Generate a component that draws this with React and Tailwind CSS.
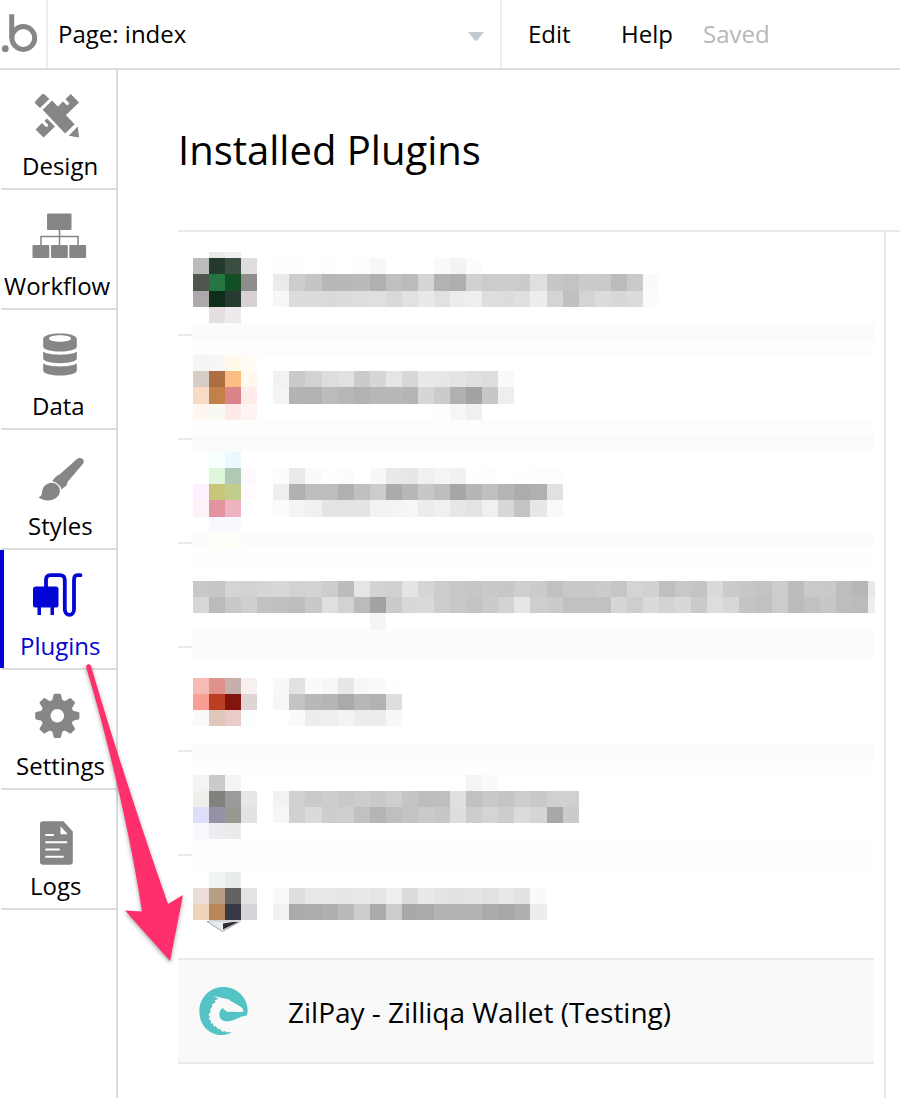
const PITCH_X = 16.07;
const PITCH_Y = 16.14;

const expand = (v) => (v.length === 2 ? `#${v}${v}${v}` : `#${v}`);

// Each strip: [grid row, first column, colours]. Two digits stand for a grey level.
const plugins = [
  {
    bands: [[4, "fbfbfb"], [5, "fdfdfd"]],
    strips: [
      [0, 0, "b9bcba 243a2c 3b4e41 de ff fd fd ff fd ff fd f7 ff ff ff fa f3 fc"],
      [1, 0, "50564d 257643 124f25 8f8c8d ff eb cd c5 b7 b8 ba b0 c0 bb d5 b2 af d1 cc cd cb df c7 c3 cb ca bb ca fa"],
      [2, 0, "aea8ac 0e2e1b 283a2f d7d1d4 ff f7 dc dc da dc de df d9 e1 e9 e1 ec ee de dc e0 ed d4 c0 d4 dc d8 db fb"],
      [3, 0, "ff e5dee1 ede9ed"],
    ],
    top: true,
  },
  {
    bands: [[10, "fdfdfd"], [11, "fbfbfb"]],
    strips: [
      [6, 0, "f5f5f4 f7f6f5 fffae9 fffcf6"],
      [7, 0, "d6cdc4 ac6f44 fbbe84 fffaec ff f2 ca d2 dd e1 cb d6 e5 d7 e9 e7 e4 e0 dd f9"],
      [8, 0, "f7dbc4 c2804a db8487 ffecea ff f4 b4 b2 bc b7 b2 b7 b8 b5 d6 cb b0 a3 c7 ee"],
      [9, 0, "fef7f1 f9f9f4 ffe8e8 fff4f4"],
      [9, 15, "fd f6 f0"],
    ],
  },
  {
    bands: [[17, "fcfcfc"], [18, "fefefe"]],
    strips: [
      [12, 0, "ff f8ffff e9f9ff"],
      [13, 0, "ff e0f6dc b0c9b4 fef9ff ff fc ea fa fe fc ff f8 e9 e7 f0 f5 f1 fe fd ff fe fd fd"],
      [14, 0, "fdf0ff c6c779 c1cd8d fffbff ff ee b1 be bd b0 c0 cc ab b7 c7 be a6 b6 bf b5 ac b0 e1"],
      [15, 0, "fbf2fa e494a0 efb3c2 ff ff fb f4 f0 e4 e3 e4 f3 f4 f6 ec f0 e7 e4 f0 d8 c4 e7 f9"],
      [16, 0, "ff f9f8ff faf9ff"],
      [17, 1, "fffff9 fffff9"],
    ],
  },
  {
    bands: [[23, "fcfcfc"], [24, "fcfcfc"]],
    strips: [
      [20, 0, "c8 c6 d4 d2 d6 d7 d2 d3 cd bc e5 d3 d1 e4 d5 cd c8 c6 c9 c7 ce cb c1 c8 c8 cb c6 d4 d1 bf c8 c4 d9 cb c7 c3 cc bc ca c9 bd b7 e8"],
      [21, 0, "d7 bb c8 cf c2 c0 bd c9 df d2 bb a2 cb d8 da cd c8 c4 cb d3 e6 ce ca c1 c1 c1 d6 ce da d3 d8 ca dd d7 c4 c1 cc bb c1 c7 bd bb ee"],
      [22, 11, "f5"],
    ],
  },
  {
    bands: [[30, "fbfbfb"], [31, "fefefe"]],
    strips: [
      [26, 0, "f7bbb5 df918d c7afac f6f0ef ff f8 e2 fa f7 e7 f7 f9 fe"],
      [27, 0, "f99e92 bb3d22 82160f dfd5d4 ff f6 c4 b8 b5 aa b7 b2 de"],
      [28, 0, "fbfaf8 dfc7ba ebcbca fafeff ff ff fa ed ee f3 ec ed f8"],
    ],
  },
  {
    bands: [[36, "fdfdfd"], [37, "fdfdfd"]],
    strips: [
      [32, 0, "f4 ca f4"],
      [32, 17, "f4 fa"],
      [33, 0, "efefec 81817d 9b9b9b e7 ff f2 d0 ca cd c9 cc c9 cf c5 bd bf e0 c1 c8 c5 cd c9 d0 d0"],
      [34, 0, "dedefb 9592a6 979890 e2 ff f7 d1 da cd cf c1 b5 bf c3 ca c7 dd cc d4 cd db d5 a8 cb"],
      [35, 0, "f7f9ff edecf1 ebebe9"],
    ],
  },
  {
    bands: [],
    strips: [
      [38, 0, "ff eff4f5 e9ebec"],
      [39, 0, "ebded7 b89d87 656262 e5e2e4 ff f9 de e8 e8 e6 e8 e5 ee dc e9 e4 e2 e4 e1 e8 e2 fa"],
      [40, 0, "efd3bb b9855b 393945 d7d5d7 ff f2 aa ac af b9 cd aa cc a9 aa b4 b2 b4 ab a8 af ed"],
    ],
    tip: true,
  },
];

const colX = (c) => Math.min(874.5, 193 + c * PITCH_X);
const rowY = (r) => 258.3 + r * PITCH_Y;

function PluginRow({ plugin, index }) {
  const last = index === plugins.length - 1;
  return (
    <li className="flex h-[104px] flex-col">
      <svg className="h-[102px] w-[697px] shrink-0 overflow-visible" viewBox={`178 ${232 + index * 104} 697 102`} shapeRendering="crispEdges" aria-hidden="true">
        {plugin.bands.map(([r, fill]) => (
          <rect key={r} x="192" y={rowY(r)} width="682" height={PITCH_Y} fill={`#${fill}`} />
        ))}
        {plugin.top && (
          <>
            <rect x="209" y="252" width="16" height="7" fill="#ebe7ea" />
            <rect x="225" y="252" width="16" height="7" fill="#f1eff1" />
          </>
        )}
        {plugin.strips.map(([r, c, cells]) =>
          cells.split(" ").map((v, i) =>
            v === "ff" ? null : (
              <rect key={`${r}-${c + i}`} x={colX(c + i)} y={rowY(r)} width={colX(c + i + 1) - colX(c + i)} height={PITCH_Y} fill={expand(v)} />
            )
          )
        )}
        {plugin.tip && (
          <g shapeRendering="auto">
            <path d="M207 921.500h33l-17.500 10z" fill="#e5eced" stroke="#a3a5a6" strokeWidth="1" />
            <path d="M223 923.500l13-2h3l-16 8z" fill="#2b2b33" />
            <rect x="209" y="920" width="32" height="2" fill="#d5d6d8" />
          </g>
        )}
      </svg>
      <div className={last ? "h-0.5 w-[696px] bg-[#e9e9e9]" : "h-0.5 w-3.5 bg-[#e9e9e9]"} />
    </li>
  );
}

const icons = {
  Design: (
    <g fill="#868686">
      <path d="M35.500 129.500l6.500-6.500 3.500 3.500c1.500 1.200 3.500-.6 2.200-2.200l-3.200-3.300 2.500-2.500 8 8-11.500 11z" />
      <path d="M57 107.500l6-6 3.400 3.300c1.500 1.200 3.500-.6 2.200-2.200l-3.200-3.300 5.300-5.200 8.300 8.500-13.500 13z" />
      <path d="M35 103c0-1 .5-2 1.200-2.700l5.300-5.500c1-1 2.500-1 3.500 0l4.300 4.300-9.300 9-4.200-4.200c-.5-.4-.8-.6-.8-.9z" />
      <path d="M42.700 109.700l9.400-9.200 22.500 23.700-9.500 9.300z" />
      <path d="M77.800 126.500l1.200 11.100-10.300-1.800z" />
    </g>
  ),
  Workflow: (
    <g fill="#868686">
      <rect x="47" y="213.500" width="24.500" height="16.500" rx="1" />
      <rect x="32.500" y="245" width="16.800" height="13" rx="1" />
      <rect x="51" y="245" width="16.800" height="13" rx="1" />
      <rect x="69.300" y="245" width="16.800" height="13" rx="1" />
      <path d="M59.500 230v15M41 245v-8.500h37V245" fill="none" stroke="#868686" strokeWidth="1.500" />
    </g>
  ),
  Data: (
    <g fill="#868686">
      <path fillRule="evenodd" d="M43.200 339c0-7.300 33.600-7.300 33.600 0v7.500c0 6.700-33.600 6.700-33.600 0zM49 338.500c0 4.300 22 4.300 22 0s-22-4.300-22 0z" />
      <path d="M43.200 351.500c5 4.200 28.600 4.200 33.600 0v7c0 6.200-33.600 6.200-33.600 0z" />
      <path d="M43.200 363.300c5 4.200 28.600 4.200 33.600 0v7.200c0 6.700-33.600 6.700-33.600 0z" />
    </g>
  ),
  Styles: (
    <g fill="#868686">
      <path d="M83 459.500c1.200 1.400.9 3-.2 4.400L67.500 482c-.2 4-3 5-6 7.500-1-4-4-7-9.300-8.300 2-3 4.500-6 7.300-6.800L77 459c2-1.500 4.500-1.300 6 .5z" />
      <path d="M38.500 497.300c5-1.300 2.500-6.300 5-10 4-6 12.200-6 15.200-.8 3 5 .3 11.300-6.200 13.300-5 1.500-11 .3-14-2.500z" />
    </g>
  ),
  Plugins: (
    <g fill="#0205d3">
      <path d="M36 586.500h20c1.500 0 2.500 1 2.500 2.500v16.500c0 1-1 2-2 2H54v7.500h-3.500v-7.500H41v7.500h-3.500v-7.500H35c-1 0-2-1-2-2V589c0-1.500 1-2.500 3-2.500z" />
      <path d="M46 588v-8c0-3.500 1.500-4.800 4.500-4.800h9.300c3.500 0 5 1.500 5 5v29c0 7.500 9.200 7.500 9.200 0v-29c0-3.500 1.200-5 3.500-5h3" fill="none" stroke="#0205d3" strokeWidth="3.800" strokeLinecap="round" />
    </g>
  ),
  Settings: (
    <g>
      <g fill="#868686">
        <circle cx="57.300" cy="715.800" r="16.500" />
        {[0, 45, 90, 135, 180, 225, 270, 315].map((a) => (
          <path key={a} d="M51.800 702l1.800-7.200q.2-1.100 1.200-1.100h5q1 0 1.200 1.100L62.800 702z" transform={`rotate(${a} 57.3 715.8)`} />
        ))}
      </g>
      <circle cx="57.300" cy="715.800" r="6.800" fill="#fff" />
    </g>
  ),
  Logs: (
    <g>
      <path d="M43 821.300h20.500l9.300 10.200V862c0 1.700-1.200 2.800-2.800 2.800H43c-1.800 0-3-1.100-3-2.800v-38c0-1.600 1.200-2.700 3-2.700z" fill="#868686" />
      <path d="M60.500 826.300l7.300 8h-7.300z" fill="#fff" />
      <path d="M45.300 835h8.500M45.300 842.300h21.800M45.300 849.500h14.500M45.300 856.800h18.300" stroke="#fff" strokeWidth="2" />
    </g>
  ),
};

const nav = [
  { name: "Design", pad: "pl-[22px]" },
  { name: "Workflow", pad: "pl-1" },
  { name: "Data", pad: "pl-8" },
  { name: "Styles", pad: "pl-7" },
  { name: "Plugins", pad: "pl-5", active: true },
  { name: "Settings", pad: "pl-4" },
  { name: "Logs", pad: "pl-[30px]" },
];

function NavItem({ item, index }) {
  return (
    <li className="flex h-[120px] flex-col">
      <div className={item.active ? "h-[118px] shadow-[inset_4px_0_0_#0205d3]" : "h-[118px]"}>
        <svg className="h-[78px] w-[116px]" viewBox={`0 ${70 + index * 120} 116 78`} aria-hidden="true">
          {icons[item.name]}
        </svg>
        <div className={`${item.pad} ${item.active ? "text-[#0205d3]" : "text-black"} h-9 whitespace-nowrap text-2xl leading-9`}>{item.name}</div>
      </div>
      <div className="ml-px h-0.5 rounded-tl-sm bg-[#dbdbdb]" />
    </li>
  );
}

function ZilPayLogo() {
  return (
    <svg className="h-12 w-[50px]" viewBox="62 441 150 144" aria-hidden="true">
      <path
        fill="#54c3c5"
        d="M160 577C145 588 118 587 100 578C77 567 63 543 63 513C63 472 96 441 135 441C175 441 207 472 208 510C208 522 205 528 200 528C184 528 174 541 151 544C135 546 123 537 123 524C123 514 127 507 134 504C138 511 144 516 152 516C168 514 182 518 195 515L194 507C184 496 163 488 150 478L129 473L106 468L121 477L108 481L113 485L99 495L103 498L94 511L98 513L90 526L95 529L91 538L97 541L98 551L103 549L107 561L112 557L119 568L124 566L132 575L140 573L145 577Z"
      />
    </svg>
  );
}

export default function App() {
  return (
    <div className="relative flex h-[1098px] w-[900px] flex-col overflow-hidden bg-white font-['Open_Sans',sans-serif] text-black">
      <header className="flex h-[70px] shrink-0 border-b-2 border-[#dbdcdd] text-2xl leading-[68px]">
        <div className="w-12 border-r-2 border-[#e8eef3]">
          <svg className="h-[68px] w-[46px]" viewBox="0 0 46 68" aria-hidden="true">
            <circle cx="5.300" cy="48.700" r="3.400" fill="#868686" />
            <path d="M11.700 14.300V38" stroke="#868686" strokeWidth="5" />
            <circle cx="23.300" cy="38" r="11.400" fill="none" stroke="#868686" strokeWidth="5" />
          </svg>
        </div>
        <div className="flex w-[454px] items-center justify-between border-r-2 border-[#e8eef3] pl-2.5 pr-4">
          <span>Page: index</span>
          <svg className="mt-1 h-[9px] w-4" viewBox="0 0 16 9" aria-hidden="true">
            <path d="M0 0h16L9.300 8.200q-1.300 1.300-2.600 0z" fill="#bfcad1" />
          </svg>
        </div>
        <span className="ml-[26px] w-[93px]">Edit</span>
        <span className="w-[82px]">Help</span>
        <span className="text-[#b8b8b8]">Saved</span>
      </header>

      <div className="flex min-h-0 flex-1">
        <nav className="w-[118px] shrink-0 border-r-2 border-[#dbdbdb]">
          <ul>
            {nav.map((item, i) => (
              <NavItem key={item.name} item={item} index={i} />
            ))}
          </ul>
        </nav>

        <main className="flex flex-1 flex-col pl-[60px]">
          <h1 className="h-40 pt-[50px] text-[40px] leading-[60px]">Installed Plugins</h1>
          <div className="flex min-h-0 flex-1 border-t-2 border-[#e9e9e9]">
            <ul className="w-[708px] shrink-0 border-r-2 border-[#e9e9e9]">
              {plugins.map((p, i) => (
                <PluginRow key={i} plugin={p} index={i} />
              ))}
              <li className="flex h-[104px] w-[696px] items-center border-b-2 border-[#e9e9e9] bg-[#f9f9f9] pl-[21px]">
                <ZilPayLogo />
                <span className="ml-[39px] whitespace-nowrap pt-0.5 text-[28px] leading-9 tracking-[-0.01px]">ZilPay - Zilliqa Wallet (Testing)</span>
              </li>
            </ul>
          </div>
        </main>
      </div>

      <svg className="pointer-events-none absolute left-0 top-0 h-[1098px] w-[900px] drop-shadow-[0_2px_2px_rgba(0,0,0,0.35)]" viewBox="0 0 900 1098" aria-hidden="true">
        <path d="M86 667C86 664 90 663 91 666C105 714 132 801 168 904L183 895L170 961L125 910.500L142 911.500C131 838 109 743 86 667Z" fill="#ff2f6d" />
      </svg>
    </div>
  );
}
